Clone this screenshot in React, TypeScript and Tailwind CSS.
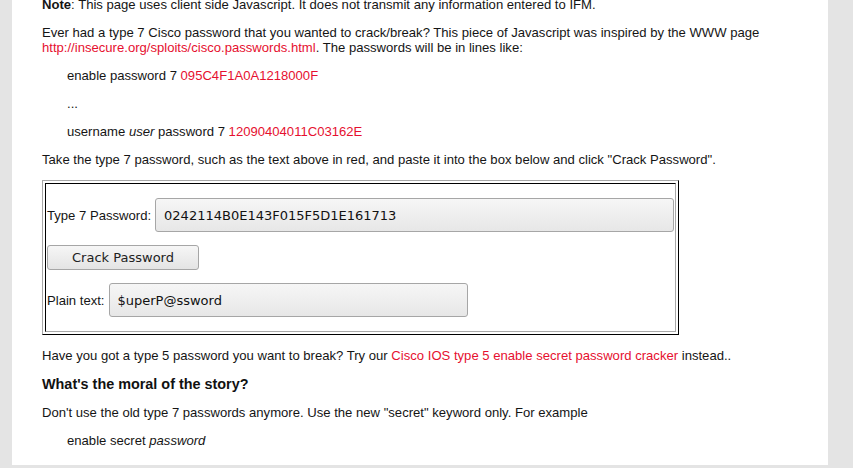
const red = "text-[#e6102f]";

function Field({
  label,
  value,
  width,
}: {
  label: string;
  value: string;
  width?: string;
}) {
  return (
    <div className="flex items-center gap-[4px]">
      <span>{label}</span>
      <div
        className={`${width ?? "flex-1"} h-[34px] flex items-center px-[8px] rounded-[3px] border border-[#a6a6a6] bg-gradient-to-b from-[#f6f6f6] to-[#e7e7e7] text-[13px] text-[#111] font-['DejaVu_Sans',sans-serif]`}
      >
        {value}
      </div>
    </div>
  );
}

export default function App() {
  return (
    <div className="min-h-[468px] h-[468px] overflow-hidden bg-[#e4e4e4]">
      <div className="ml-[12px] w-[816px] h-full bg-white px-[30px] text-[13.1px] leading-[15px] text-[#151515] font-['Liberation_Sans',Arial,sans-serif]">
        <div className="-mt-[3px] flex flex-col gap-[13px]">
          <p>
            <b>Note</b>: This page uses client side Javascript. It does not
            transmit any information entered to IFM.
          </p>
          <p>
            Ever had a type 7 Cisco password that you wanted to crack/break?
            This piece of Javascript was inspired by the WWW page{" "}
            <a className={red}>http://insecure.org/sploits/cisco.passwords.html</a>
            . The passwords will be in lines like:
          </p>
          <p className="pl-[25px]">
            enable password 7 <span className={red}>095C4F1A0A1218000F</span>
          </p>
          <p className="pl-[25px]">...</p>
          <p className="pl-[25px]">
            username <i>user</i> password 7{" "}
            <span className={red}>12090404011C03162E</span>
          </p>
          <p>
            Take the type 7 password, such as the text above in red, and paste
            it into the box below and click "Crack Password".
          </p>

          {/* form table */}
          <div className="w-[637px] h-[155px] border border-t-[#a8a8a8] border-l-[#a8a8a8] border-r-black border-b-black p-[2px]">
            <div className="h-full border border-t-black border-l-black border-r-[#a8a8a8] border-b-[#a8a8a8] px-[1px] pt-[14px] flex flex-col gap-[13px]">
              <Field label="Type 7 Password:" value="0242114B0E143F015F5D1E161713" />
              <div>
                <button className="w-[152px] h-[25px] rounded-[3px] border border-[#a6a6a6] bg-gradient-to-b from-[#f6f6f6] to-[#e4e4e4] text-[13px] text-[#222] font-['DejaVu_Sans',sans-serif]">
                  Crack Password
                </button>
              </div>
              <Field label="Plain text:" value="$uperP@ssword" width="w-[359px]" />
            </div>
          </div>

          <p>
            Have you got a type 5 password you want to break? Try our{" "}
            <a className={red}>Cisco IOS type 5 enable secret password cracker</a>{" "}
            instead..
          </p>
          <h3 className="text-[14.4px] leading-[17px] font-bold text-[#111]">
            What's the moral of the story?
          </h3>
          <p className="-mt-[1px]">
            Don't use the old type 7 passwords anymore. Use the new "secret"
            keyword only. For example
          </p>
          <p className="pl-[25px]">
            enable secret <i>password</i>
          </p>
        </div>
      </div>
    </div>
  );
}
